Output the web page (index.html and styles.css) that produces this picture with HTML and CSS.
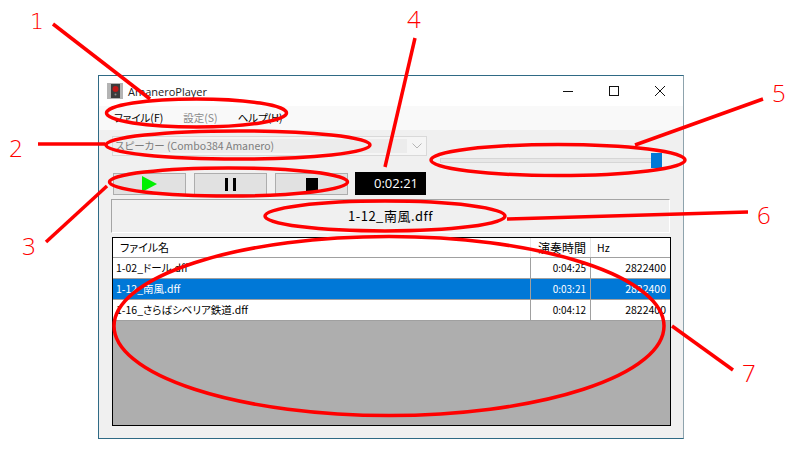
FILE: index.html
```html
<!DOCTYPE html>
<html lang="ja">
<head>
    <meta charset="UTF-8">
    <title>AmaneroPlayer</title>
    <link rel="stylesheet" href="styles.css">
</head>
<body>

<div class="window">
    <div class="titlebar">
        <div class="app-icon">
            <svg width="16" height="16" viewBox="0 0 16 16">
                <rect width="16" height="16" fill="#b4b4b4"/>
                <rect x="4" y="1" width="9" height="14" fill="#3c3c3c"/>
                <circle cx="8.5" cy="6" r="3" fill="#c01818"/>
                <circle cx="8.5" cy="11.5" r="1" fill="#8a8a8a"/>
            </svg>
        </div>
        <span class="title">AmaneroPlayer</span>
        <div class="caption-buttons">
            <svg width="12" height="12" viewBox="0 0 12 12"><path d="M1 6.5h10" stroke="#111" fill="none"/></svg>
            <svg width="12" height="12" viewBox="0 0 12 12"><rect x="1.5" y="1.5" width="9" height="9" stroke="#111" fill="none"/></svg>
            <svg width="12" height="12" viewBox="0 0 12 12"><path d="M1 1l10 10M11 1L1 11" stroke="#111" fill="none"/></svg>
        </div>
    </div>

    <div class="menubar">
        <span class="menu-item">ファイル(F)</span>
        <span class="menu-item disabled">設定(S)</span>
        <span class="menu-item">ヘルプ(H)</span>
    </div>

    <div class="content">
        <div class="controls">
            <div class="controls-left">
                <div class="combo">
                    <div class="combo-text">スピーカー (Combo384 Amanero)</div>
                    <div class="combo-arrow">
                        <svg width="10" height="6" viewBox="0 0 10 6"><path d="M.5.5L5 5 9.500.5" stroke="#b5b5b5" fill="none"/></svg>
                    </div>
                </div>
                <div class="transport">
                    <div class="btn">
                        <svg width="15" height="16" viewBox="0 0 15 16"><path d="M0 0l15 8L0 16z" fill="#00f000"/></svg>
                    </div>
                    <div class="btn">
                        <svg width="11" height="13" viewBox="0 0 11 13"><path d="M0 0h3v13H0zM8 0h3v13H8z" fill="#000"/></svg>
                    </div>
                    <div class="btn">
                        <svg width="12" height="13" viewBox="0 0 12 13"><rect width="12" height="13" fill="#000"/></svg>
                    </div>
                    <div class="time">0:02:21</div>
                </div>
            </div>
            <div class="slider">
                <div class="track"><div class="thumb"></div></div>
                <div class="ticks"><i></i><i></i><i class="tick-gap"></i><i></i></div>
            </div>
        </div>

        <div class="now-playing">1-12_南風.dff</div>

        <div class="list">
            <div class="row head">
                <div class="cell name">ファイル名</div>
                <div class="cell len head-len">演奏時間</div>
                <div class="cell hz head-hz">Hz</div>
            </div>
            <div class="row">
                <div class="cell name">1-02_ドール.dff</div>
                <div class="cell len">0:04:25</div>
                <div class="cell hz">2822400</div>
            </div>
            <div class="row selected">
                <div class="cell name">1-12_南風.dff</div>
                <div class="cell len">0:03:21</div>
                <div class="cell hz">2822400</div>
            </div>
            <div class="row">
                <div class="cell name">1-16_さらばシベリア鉄道.dff</div>
                <div class="cell len">0:04:12</div>
                <div class="cell hz">2822400</div>
            </div>
        </div>
    </div>
</div>

<!-- red notes drawn on top of the screenshot -->
<svg class="notes" width="798" height="454" viewBox="0 0 798 454">
    <g fill="none" stroke="#f00" stroke-width="3.500">
        <ellipse cx="196.500" cy="113" rx="90" ry="14"/>
        <ellipse cx="238" cy="145" rx="132" ry="14"/>
        <ellipse cx="228.500" cy="182" rx="119" ry="14"/>
        <ellipse cx="558" cy="160" rx="127" ry="15.500"/>
        <ellipse cx="385" cy="216" rx="120" ry="15"/>
        <ellipse cx="389" cy="326" rx="275" ry="89.500"/>
        <path d="M53 24L150 99"/>
        <path d="M38 144H105"/>
        <path d="M46 242L107 186"/>
        <path d="M415 38L385 167"/>
        <path d="M763 99L635 145"/>
        <path d="M507 219L748 212"/>
        <path d="M733 370L672 326"/>
    </g>
    <g class="note-num" fill="#f00">
        <text class="note-one" x="30" y="29">1</text>
        <text x="9" y="157">2</text>
        <text x="22" y="255">3</text>
        <text x="407" y="28">4</text>
        <text x="772" y="102">5</text>
        <text x="757" y="224">6</text>
        <text x="742" y="382">7</text>
    </g>
</svg>

</body>
</html>
```

FILE: styles.css
```css
* {
    box-sizing: border-box;
}
html, body {
    height: 100%;
}
body {
    margin: 0;
    background-color: #ffffff;
    font-family: "Noto Sans CJK JP", "Open Sans", sans-serif;
    font-size: 10.500px;
    font-feature-settings: "palt";
    color: #000;
    overflow: hidden;
    padding: 75px 0 0 98px;
}
.window {
    width: 586px;
    height: 364px;
    border: 1px solid #2f6a85;
    border-right-color: #8ea3ad;
    background-color: #f0f0f0;
    display: flex;
    flex-direction: column;
}
.titlebar {
    height: 30px;
    background-color: #ffffff;
    display: flex;
    align-items: center;
    padding-left: 8px;
}
.app-icon {
    width: 16px;
    height: 16px;
    display: flex;
}
.title {
    margin-left: 5px;
    font-family: "Open Sans", sans-serif;
    font-size: 11px;
    color: #222;
}
.caption-buttons {
    margin-left: auto;
    padding-right: 17px;
    display: flex;
    gap: 34px;
}
.menubar {
    height: 24px;
    background-color: #f9f9f9;
    display: flex;
    align-items: center;
    padding: 0 0 2px 15px;
    gap: 20px;
}
.menu-item.disabled {
    color: #8a8a8a;
}
.content {
    flex: 1;
    padding: 6px 12px 12px 12px;
    display: flex;
    flex-direction: column;
}
.controls {
    display: flex;
    height: 63px;
}
.controls-left {
    width: 316px;
}
.combo {
    margin-left: 1px;
    height: 20px;
    border: 1px solid #d9d9d9;
    display: flex;
    width: 315px;
    background-color: #f5f5f5;
}
.combo-text {
    flex: 1;
    background-color: #ececec;
    margin: 2px 0 2px 0;
    line-height: 14px;
    padding-left: 2px;
    color: #7d7d7d;
    white-space: nowrap;
}
.combo-arrow {
    width: 19px;
    display: flex;
    align-items: center;
    justify-content: center;
}
.transport {
    display: flex;
    margin: 16px 0 0 2px;
    gap: 8px;
    align-items: flex-start;
}
.btn {
    width: 73px;
    height: 22px;
    margin-top: 1px;
    border: 1px solid #adadad;
    background-color: #e1e1e1;
    display: flex;
    align-items: center;
    justify-content: center;
}
.time {
    width: 71px;
    height: 23px;
    margin-left: -1px;
    background-color: #000;
    color: #fff;
    font-family: "Open Sans", sans-serif;
    font-size: 13px;
    line-height: 23px;
    text-align: right;
    padding-right: 8px;
}
.slider {
    margin-left: 13px;
    width: 221px;
    padding-top: 22px;
}
.track {
    position: relative;
    height: 5px;
    background-color: #e7e7e7;
    border: 1px solid #d6d6d6;
    width: 216px;
}
.thumb {
    position: absolute;
    left: 210px;
    top: -6px;
    width: 11px;
    height: 15px;
    background-color: #0078d7;
}
.ticks {
    display: flex;
    margin: 10px 0 0 5px;
    width: 211px;
    justify-content: flex-start;
}
.ticks i {
    width: 1px;
    height: 3px;
    background-color: #a0a0a0;
    margin-right: 29px;
}
.ticks i.tick-gap {
    margin-right: 29px;
    margin-left: 120px;
}
.now-playing {
    width: 559px;
    height: 34px;
    padding-bottom: 2px;
    border-top: 1px solid #a5a5a5;
    border-left: 1px solid #a5a5a5;
    border-right: 1px solid #fff;
    border-bottom: 1px solid #fff;
    font-size: 13px;
    letter-spacing: 0.5px;
    display: flex;
    align-items: center;
    justify-content: center;
}
.list {
    margin: 4px 0 0 1px;
    flex: 1;
    width: 559px;
    border: 1px solid #000;
    border-right-width: 1px;
    background-color: #aeaeae;
}
.row {
    display: flex;
    height: 21px;
    background-color: #fff;
    border-bottom: 1px solid #a0a0a0;
    line-height: 19px;
    white-space: nowrap;
}
.row.head {
    height: 20px;
}
.row.selected {
    background-color: #0078d7;
    color: #fff;
}
.cell {
    padding: 0 4px 0 4px;
}
.name {
    width: 417px;
    padding-left: 3px;
}
.row.head .name {
    padding-left: 7px;
    font-size: 11px;
}
.len {
    width: 60px;
    border-left: 1px solid #a0a0a0;
    text-align: right;
    font-size: 10px;
}
.hz {
    flex: 1;
    border-left: 1px solid #a0a0a0;
    text-align: right;
}
.row.head .len {
    border-left-color: #e5e5e5;
    font-size: 12px;
}
.row.head .hz {
    border-left-color: #e5e5e5;
    text-align: left;
    padding-left: 6px;
}
.notes {
    position: absolute;
    left: 0;
    top: 0;
}
.note-num {
    font-family: "Open Sans", sans-serif;
    font-size: 24px;
    font-weight: 300;
}
.note-one {
    font-family: "DejaVu Sans", sans-serif;
    font-size: 22px;
}
```
